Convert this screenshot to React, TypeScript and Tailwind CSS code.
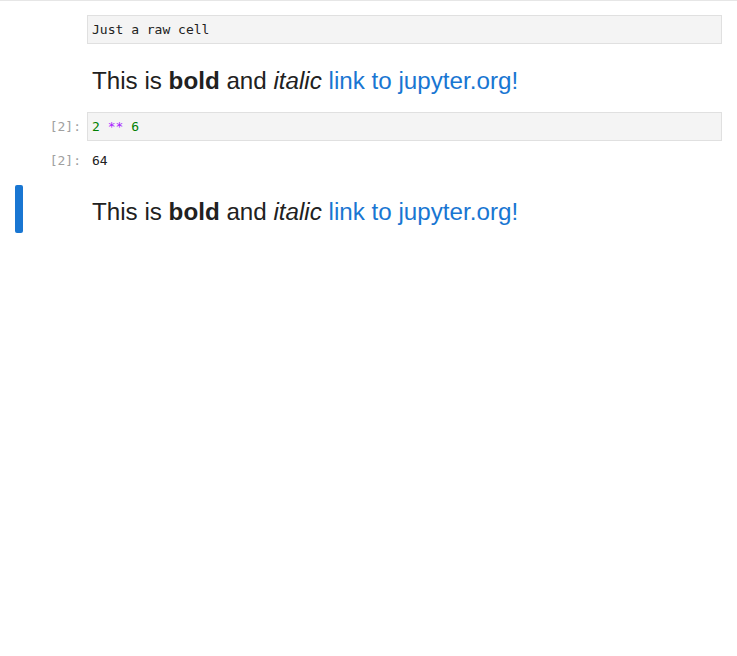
export default function App() {
  const mono = "font-['DejaVu_Sans_Mono',monospace] text-[13px] leading-[17px]";
  const md = "font-['Liberation_Sans',Arial,sans-serif] text-[24.2px] leading-[28px] text-[#212121]";

  const Markdown = () => (
    <p className={md}>
      This is <strong className="font-bold">bold</strong> and <em className="italic">italic</em>{" "}
      <a href="#" className="text-[#1976d2]">
        link to jupyter.org!
      </a>
    </p>
  );

  return (
    <div className="min-h-screen bg-white border-t border-[#e6e6e6]">
      {/* raw cell */}
      <div className="flex mt-[14px] pr-[15px]">
        <div className="w-[87px] shrink-0" />
        <div className={`flex-1 bg-[#f4f4f4] border border-[#e0e0e0] px-[4px] py-[5px] text-[#212121] ${mono}`}>
          Just a raw cell
        </div>
      </div>

      {/* markdown cell */}
      <div className="flex mt-[23px] pr-[15px]">
        <div className="w-[87px] shrink-0" />
        <div className="flex-1 px-[5px]">
          <Markdown />
        </div>
      </div>

      {/* code cell */}
      <div className="flex mt-[17px] pr-[15px]">
        <div className={`w-[87px] shrink-0 pr-[6px] py-[6px] text-right text-[#a0a0a0] ${mono}`}>[2]:</div>
        <div className={`flex-1 bg-[#f4f4f4] border border-[#e0e0e0] px-[4px] py-[5px] ${mono}`}>
          <span className="text-[#008000]">2</span> <span className="text-[#aa22ff]">**</span>{" "}
          <span className="text-[#008000]">6</span>
        </div>
      </div>

      {/* output */}
      <div className="flex mt-[5px] pr-[15px]">
        <div className={`w-[87px] shrink-0 pr-[6px] py-[6px] text-right text-[#a0a0a0] ${mono}`}>[2]:</div>
        <div className={`flex-1 px-[5px] py-[6px] text-[#212121] ${mono}`}>64</div>
      </div>

      {/* active markdown cell */}
      <div className="flex mt-[10px] pr-[15px] pl-[15px]">
        <div className="w-[8px] h-[48px] shrink-0 rounded-[2px] bg-[#1976d2]" />
        <div className="w-[64px] shrink-0" />
        <div className="flex-1 px-[5px] pt-[13px]">
          <Markdown />
        </div>
      </div>
    </div>
  );
}
